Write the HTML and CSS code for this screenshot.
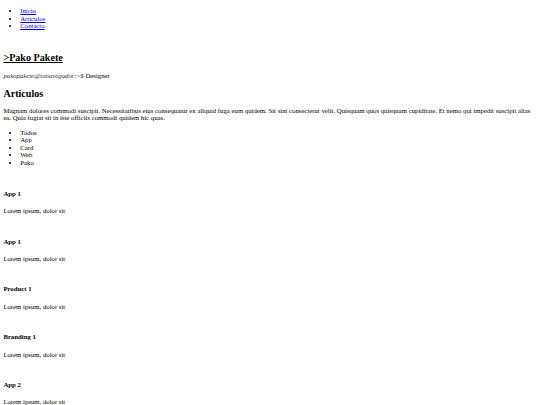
FILE: index.html
```html
<!DOCTYPE html>
<html lang="es">
<head>
<meta charset="utf-8">
<title>Pako Pakete</title>
<link rel="stylesheet" href="styles.css">
</head>
<body class="body">
<header class="site-header">
  <nav class="nav">
    <ul class="nav-list">
      <li><a class="nav-link" href="#">Inicio</a></li>
      <li><a class="nav-link" href="#">Articulos</a></li>
      <li><a class="nav-link" href="#">Contacto</a></li>
    </ul>
  </nav>
</header>
<main class="main">
  <section class="hero">
    <h2 class="brand"><a class="brand-link" href="#">&gt;Pako Pakete</a></h2>
    <p class="tagline"><em class="prompt">pakopakete@tunavegador:~$</em> Designer</p>
  </section>
  <section class="articles">
    <h2 class="section-title">Articulos</h2>
    <p class="intro">Magnam dolores commodi suscipit. Necessitatibus eius consequatur ex aliquid fuga eum quidem. Sit sint consectetur velit. Quisquam quos quisquam cupiditate. Et nemo qui impedit suscipit alias ea. Quia fugiat sit in iste officiis commodi quidem hic quas.</p>
    <ul class="filters">
      <li>Todos</li>
      <li>App</li>
      <li>Card</li>
      <li>Web</li>
      <li>Pako</li>
    </ul>
    <div class="cards">
      <div class="card"><h4 class="card-title">App 1</h4><p class="card-text">Lorem ipsum, dolor sit</p></div>
      <div class="card"><h4 class="card-title">App 1</h4><p class="card-text">Lorem ipsum, dolor sit</p></div>
      <div class="card"><h4 class="card-title">Product 1</h4><p class="card-text">Lorem ipsum, dolor sit</p></div>
      <div class="card"><h4 class="card-title">Branding 1</h4><p class="card-text">Lorem ipsum, dolor sit</p></div>
      <div class="card"><h4 class="card-title">App 2</h4><p class="card-text">Lorem ipsum, dolor sit</p></div>
    </div>
  </section>
</main>
</body>
</html>
```
FILE: styles.css
```css
.body {
  margin: 3.375px;
  font-family: "Liberation Serif", "Times New Roman", serif;
  font-size: 6.75px;
  line-height: 7.5px;
  color: #000;
  background: #fff;
}

.nav-list {
  margin: 3.75px 0 6.75px;
  padding-left: 16.875px;
}

.nav-link {
  color: #0000ee;
}

.brand {
  font-size: 10.125px;
  line-height: normal;
  margin: 22.7px 0 8.4px;
}

.brand-link {
  color: #000;
}

.tagline {
  margin: 6.75px 0;
}

.prompt {
  color: #333;
}

.section-title {
  font-size: 10.125px;
  line-height: normal;
  margin: 8.4px 0;
}

.intro {
  margin: 6.75px 0;
}

.filters {
  margin: 6.75px 0 7.75px;
  padding-left: 16.875px;
}

.card {
  display: flow-root;
  padding-top: 7.05px;
}

.card-title {
  font-size: 6.75px;
  margin: 8.98px 0 9.98px;
}

.card-text {
  margin: 6.75px 0;
}
```
